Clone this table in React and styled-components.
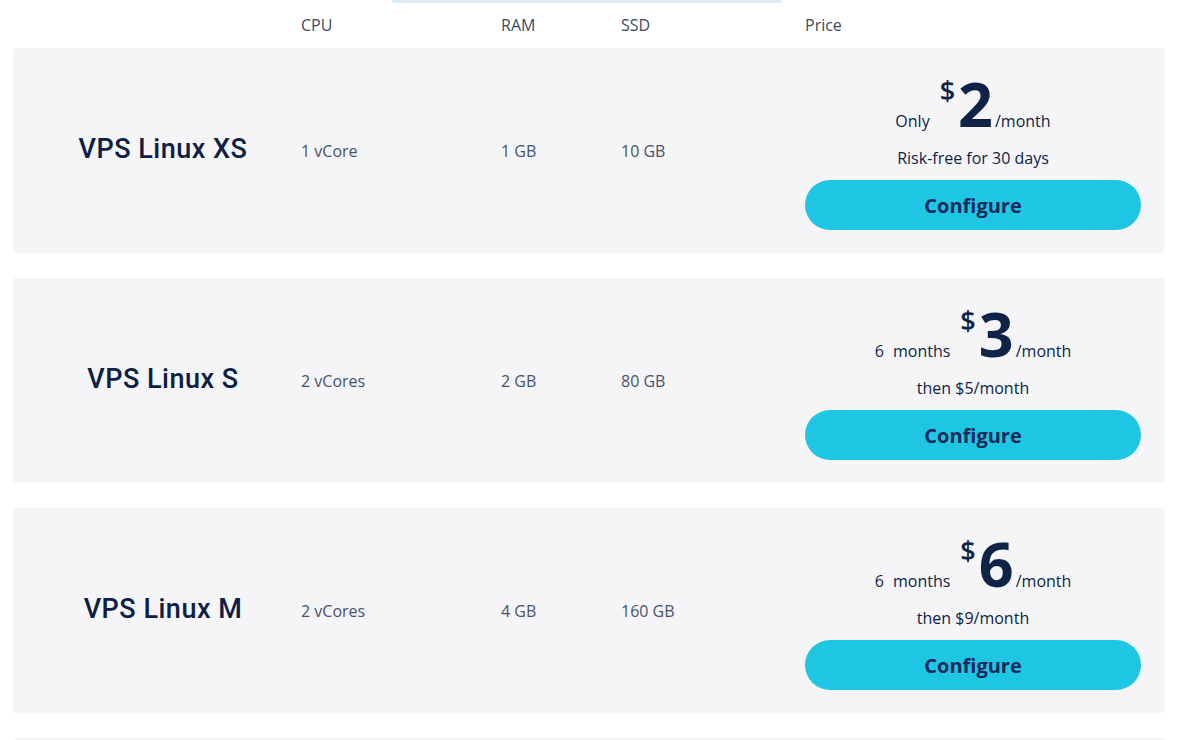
import React from "react";
import styled, { createGlobalStyle } from "styled-components";

const Global = createGlobalStyle`
  html, body { margin: 0; padding: 0; background: #ffffff; }
  body { font-family: "Open Sans", "Liberation Sans", sans-serif; color: #0f2347; overflow: hidden; }
`;

const Page = styled.div`
  width: 1152px;
  margin-left: 13px;
  display: flex;
  flex-direction: column;
`;

const TabsEdge = styled.div`
  align-self: center;
  width: 390px;
  height: 3px;
  margin-left: -4px;
  background: #dcedf8;
  border-radius: 0 0 8px 8px;
`;

const Grid = styled.div`
  display: grid;
  grid-template-columns: 288px 200px 120px 184px 336px;
  align-items: center;
`;

const Header = styled(Grid)`
  height: 45px;
  font-size: 16px;
  color: #3d4a5e;
`;

const HeaderCell = styled.div`
  line-height: 20px;
  margin-top: -2px;
`;

const List = styled.div`
  display: flex;
  flex-direction: column;
  gap: 25px;
`;

const Card = styled(Grid)`
  background: #f5f5f8;
  border-radius: 3px;
  padding: 24px 0 23px;
  min-height: 158px;
`;

const Name = styled.div`
  font-family: Roboto, "Liberation Sans", sans-serif;
  font-weight: 500;
  font-size: 27px;
  letter-spacing: 0.5px;
  color: #0b2044;
  text-align: center;
  padding-left: 12px;
  margin-top: -4px;
`;

const Value = styled.div`
  font-size: 16px;
  color: #45536b;
`;

const PriceCol = styled.div`
  display: flex;
  flex-direction: column;
  align-items: center;
`;

const PriceLine = styled.div`
  display: flex;
  align-items: baseline;
  padding-top: 2px;
  color: #0f2347;
`;

const Lead = styled.span`
  font-size: 16px;
  font-weight: 500;
  margin-right: 10px;
  word-spacing: ${(p) => (p.$wide ? "5px" : "0")};
`;

const Dollar = styled.span`
  align-self: flex-start;
  font-size: 27px;
  font-weight: 600;
  line-height: 1;
  margin-top: 3px;
  margin-right: 3px;
`;

const Amount = styled.span`
  font-size: 61px;
  font-weight: 700;
  line-height: 60px;
`;

const Per = styled.span`
  font-size: 16px;
  font-weight: 500;
  margin-left: 2px;
`;

const Sub = styled.div`
  margin-top: 14px;
  font-size: 16px;
  font-weight: 500;
  line-height: 20px;
  color: #0f2347;
`;

const Button = styled.button`
  margin-top: 12px;
  width: 336px;
  height: 50px;
  border: none;
  border-radius: 25px;
  background: #1fc6e4;
  color: #142a5c;
  font-family: "Open Sans", "Liberation Sans", sans-serif;
  font-weight: 700;
  font-size: 20px;
  cursor: pointer;
`;

const NextCard = styled.div`
  height: 3px;
  background: #f5f5f8;
  border-radius: 3px 3px 0 0;
`;

const plans = [
  { name: "VPS Linux XS", cpu: "1 vCore", ram: "1 GB", ssd: "10 GB", lead: "Only", amount: "2", sub: "Risk-free for 30 days" },
  { name: "VPS Linux S", cpu: "2 vCores", ram: "2 GB", ssd: "80 GB", lead: "6 months", wide: true, amount: "3", sub: "then $5/month" },
  { name: "VPS Linux M", cpu: "2 vCores", ram: "4 GB", ssd: "160 GB", lead: "6 months", wide: true, amount: "6", sub: "then $9/month" },
];

export default function App() {
  return (
    <>
      <Global />
      <Page>
        <TabsEdge />
        <Header>
          <HeaderCell />
          <HeaderCell>CPU</HeaderCell>
          <HeaderCell>RAM</HeaderCell>
          <HeaderCell>SSD</HeaderCell>
          <HeaderCell>Price</HeaderCell>
        </Header>
        <List>
          {plans.map((p) => (
            <Card key={p.name}>
              <Name>{p.name}</Name>
              <Value>{p.cpu}</Value>
              <Value>{p.ram}</Value>
              <Value>{p.ssd}</Value>
              <PriceCol>
                <PriceLine>
                  <Lead $wide={p.wide}>{p.lead}</Lead>
                  <Dollar>$</Dollar>
                  <Amount>{p.amount}</Amount>
                  <Per>/month</Per>
                </PriceLine>
                <Sub>{p.sub}</Sub>
                <Button>Configure</Button>
              </PriceCol>
            </Card>
          ))}
          <NextCard />
        </List>
      </Page>
    </>
  );
}
